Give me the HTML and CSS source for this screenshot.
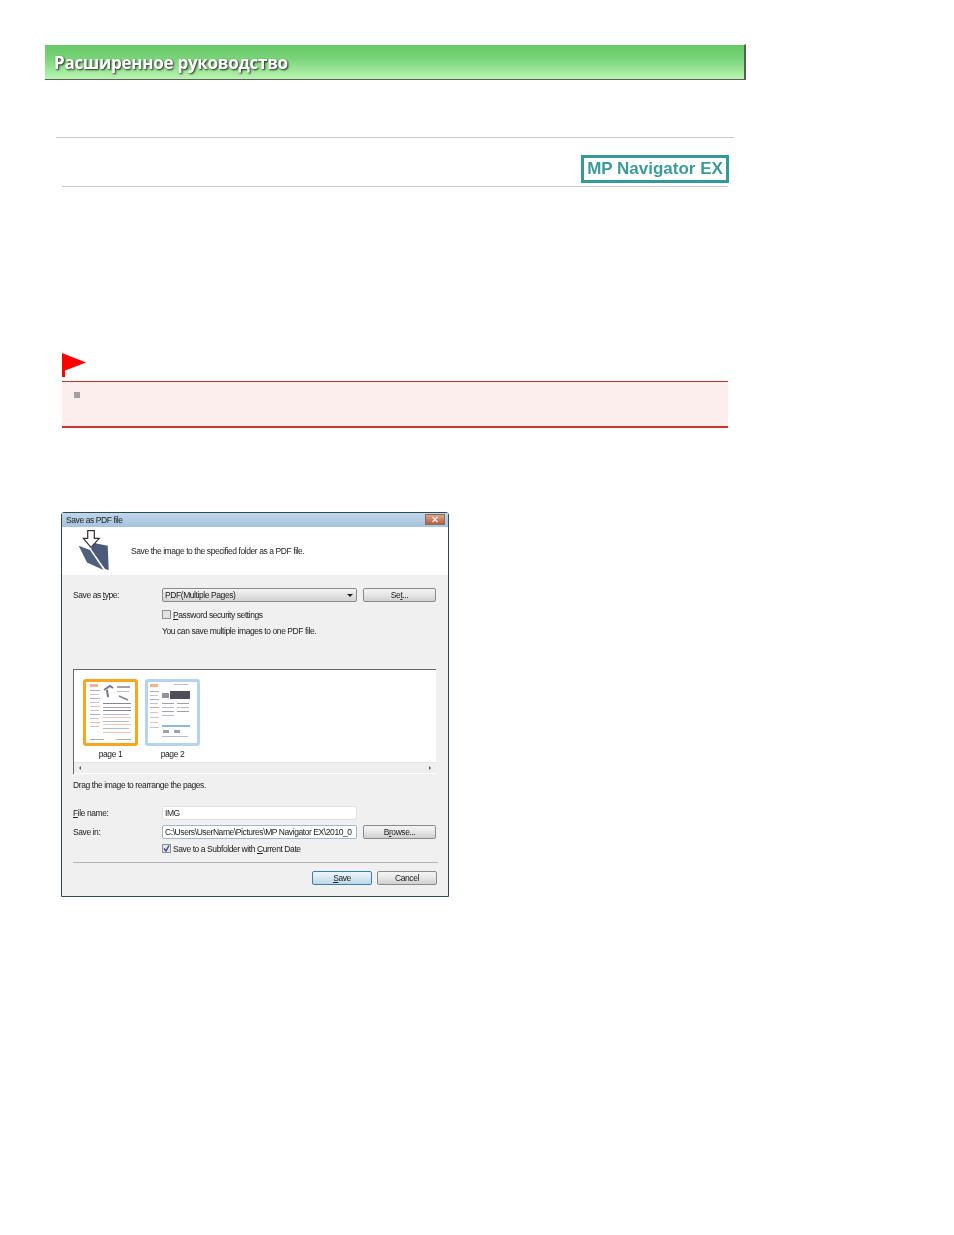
FILE: index.html
```html
<!DOCTYPE html>
<html lang="ru">
<head>
    <meta charset="UTF-8">
    <title>Расширенное руководство</title>
    <link rel="stylesheet" href="styles.css">
</head>
<body>
    <div class="page-head"><h1>Расширенное руководство</h1></div>
    <hr class="rule-top">
    <div class="content">
        <div class="product-row"><span class="product-logo">MP Navigator EX</span></div>

        <svg class="flag" width="25" height="25" viewBox="0 0 25 25"><path d="M0 0 L24 9.5 L3 17.5 L3 24 L0 24 Z" fill="#f00"/></svg>
        <div class="note"><span class="note-bullet"></span></div>

        <div class="dialog">
            <div class="titlebar">
                <span>Save as PDF file</span>
                <span class="close-btn"><svg width="8" height="7" viewBox="0 0 8 7"><path d="M1.5 1 L6.5 6 M6.5 1 L1.5 6" stroke="#f4e8e0" stroke-width="1.4"/></svg></span>
            </div>
            <div class="dialog-head">
                <svg class="save-icon" width="36" height="44" viewBox="0 0 36 44">
                    <path d="M18 14 L31.7 16.7 L32.7 41 L29 40 L15 20 Z" fill="#4a5a78"/>
                    <path d="M2.7 16.7 L14 21 L27.5 41 L11 33.5 Z" fill="#4f5f7e"/>
                    <path d="M11.7 1.7 H18.3 V9.3 H23.3 L15 18.3 L7.3 9.3 H11.7 Z" fill="#fff" stroke="#333" stroke-width="1.2"/>
                </svg>
                <span>Save the image to the specified folder as a PDF file.</span>
            </div>
            <div class="dialog-body">
                <div class="form-row type-row">
                    <label class="field-label">Save as <u>t</u>ype:</label>
                    <div class="select"><span>PDF(Multiple Pages)</span><i class="arrow"></i></div>
                    <button class="btn">Se<u>t</u>...</button>
                </div>
                <div class="check-row"><span class="check"></span><span><u>P</u>assword security settings</span></div>
                <div class="hint">You can save multiple images to one PDF file.</div>

                <div class="page-list">
                    <div class="thumbs">
                        <div class="thumb">
                            <div class="thumb-frame selected">
                                <svg width="49" height="61" viewBox="0 0 49 61">
                                    <rect x="4" y="2" width="8" height="3" fill="#f0a070"/>
                                    <rect x="4" y="8" width="10" height="1" fill="#99b"/><rect x="4" y="12" width="9" height="1" fill="#abc"/><rect x="4" y="16" width="10" height="1" fill="#99b"/><rect x="4" y="20" width="9" height="1" fill="#abc"/><rect x="4" y="24" width="10" height="1" fill="#f0b090"/><rect x="4" y="28" width="9" height="1" fill="#abc"/><rect x="4" y="32" width="10" height="1" fill="#99b"/><rect x="4" y="36" width="9" height="1" fill="#abc"/><rect x="4" y="40" width="10" height="1" fill="#f0b090"/><rect x="4" y="44" width="9" height="1" fill="#abc"/>
                                    <path d="M18 8 L24 4 L27 6 M21 8 L22 15" stroke="#556" stroke-width="2" fill="none"/>
                                    <rect x="31" y="4" width="13" height="2" fill="#889"/><rect x="31" y="9" width="12" height="1" fill="#aab"/><path d="M33 14 L42 18" stroke="#667" stroke-width="1.5"/>
                                    <rect x="17" y="21" width="28" height="1" fill="#668"/><rect x="17" y="25" width="28" height="1" fill="#88a"/><rect x="17" y="28" width="28" height="1" fill="#668"/><rect x="17" y="32" width="26" height="1" fill="#aab"/><rect x="17" y="35" width="28" height="1" fill="#e8b8a0"/><rect x="17" y="39" width="26" height="1" fill="#aab"/><rect x="17" y="42" width="28" height="1" fill="#e8b8a0"/><rect x="17" y="46" width="26" height="1" fill="#aab"/><rect x="17" y="50" width="28" height="1" fill="#e8b8a0"/>
                                    <rect x="4" y="57" width="14" height="1" fill="#99a"/><rect x="30" y="57" width="15" height="1" fill="#99a"/>
                                </svg>
                            </div>
                            <span>page 1</span>
                        </div>
                        <div class="thumb">
                            <div class="thumb-frame">
                                <svg width="45" height="59" viewBox="0 0 45 59">
                                    <rect x="2" y="2" width="8" height="3" fill="#f0a070"/><rect x="26" y="2" width="14" height="1" fill="#aab"/>
                                    <rect x="2" y="9" width="9" height="1" fill="#99b"/><rect x="2" y="13" width="8" height="1" fill="#abc"/><rect x="2" y="17" width="9" height="1" fill="#99b"/><rect x="2" y="21" width="8" height="1" fill="#abc"/><rect x="2" y="25" width="9" height="1" fill="#99b"/><rect x="2" y="30" width="8" height="1" fill="#f0b090"/><rect x="2" y="35" width="9" height="1" fill="#abc"/><rect x="2" y="40" width="8" height="1" fill="#f0b090"/><rect x="2" y="45" width="9" height="1" fill="#abc"/>
                                    <rect x="14" y="11" width="7" height="5" fill="#778"/><rect x="22" y="9" width="20" height="8" fill="#223"/>
                                    <rect x="14" y="21" width="12" height="1" fill="#889"/><rect x="29" y="21" width="12" height="1" fill="#889"/><rect x="14" y="25" width="12" height="1" fill="#aab"/><rect x="29" y="25" width="12" height="1" fill="#aab"/><rect x="14" y="29" width="12" height="1" fill="#889"/><rect x="29" y="29" width="12" height="1" fill="#889"/><rect x="14" y="33" width="12" height="1" fill="#aab"/>
                                    <rect x="14" y="43" width="28" height="2" fill="#6aa8dd"/>
                                    <rect x="15" y="48" width="6" height="3" fill="#889"/><rect x="26" y="48" width="6" height="3" fill="#889"/><rect x="14" y="54" width="26" height="1" fill="#aab"/>
                                </svg>
                            </div>
                            <span>page 2</span>
                        </div>
                    </div>
                    <div class="scrollbar"><i class="tri-left"></i><i class="tri-right"></i></div>
                </div>

                <div class="hint drag-hint">Drag the image to rearrange the pages.</div>

                <div class="form-row name-row">
                    <label class="field-label"><u>F</u>ile name:</label>
                    <div class="text-input">IMG</div>
                </div>
                <div class="form-row folder-row">
                    <label class="field-label">Save in:</label>
                    <div class="text-input focused">C:\Users\UserName\Pictures\MP Navigator EX\2010_0</div>
                    <button class="btn">B<u>r</u>owse...</button>
                </div>
                <div class="check-row subfolder-row"><span class="check checked"><svg width="9" height="9" viewBox="0 0 9 9"><path d="M2 4.5 L4 7 L7 1.5" stroke="#3a4a80" stroke-width="1.4" fill="none"/></svg></span><span>Save to a Subfolder with <u>C</u>urrent Date</span></div>

                <div class="separator"></div>
                <div class="actions">
                    <button class="btn btn-default"><u>S</u>ave</button>
                    <button class="btn">Cancel</button>
                </div>
            </div>
        </div>
    </div>
</body>
</html>
```

FILE: styles.css
```css
body {
    margin: 0;
    background: #fff;
    font-family: "Open Sans", "Liberation Sans", sans-serif;
    color: #222;
}
.page-head {
    box-sizing: border-box;
    width: 701px;
    height: 36px;
    margin: 44px 0 0 45px;
    border-top: 1px solid #fff;
    border-right: 2px solid #5c5c5c;
    border-bottom: 1px solid #5c5c5c;
    background: linear-gradient(#66c966, #7ad47a 40%, #b9f5b0);
}
h1 {
    margin: 0;
    padding-left: 9px;
    font-size: 17px;
    line-height: 35px;
    height: 35px;
    font-weight: 700;
    letter-spacing: -0.27px;
    color: #fff;
    text-shadow: 1px 1px 2px #222;
    filter: blur(0.3px);
}
.rule-top {
    width: 678px;
    height: 1px;
    margin: 57px 0 0 56px;
    border: 0;
    background: #c8c8c8;
}
.content {
    width: 666px;
    margin-left: 62px;
}
.product-row {
    display: flex;
    justify-content: flex-end;
    height: 31px;
    padding-top: 17px;
    border-bottom: 1px solid #c8c8c8;
}
.product-logo {
    box-sizing: border-box;
    width: 148px;
    height: 28px;
    margin-right: -1px;
    border: 3px solid #339999;
    color: #3d9a9a;
    font-family: "Liberation Sans", sans-serif;
    font-size: 17px;
    font-weight: 700;
    line-height: 22px;
    text-align: center;
    white-space: nowrap;
    filter: blur(0.3px);
}
.flag {
    display: block;
    margin-top: 166px;
}
.note {
    box-sizing: border-box;
    height: 47px;
    margin-top: 3px;
    padding: 10px 0 0 12px;
    background: #fdeeee;
    border-top: 1px solid #cc3333;
    border-bottom: 2px solid #cc3333;
}
.note-bullet {
    display: block;
    width: 6px;
    height: 6px;
    background: #a0a0a0;
}

/* dialog */
.dialog {
    box-sizing: border-box;
    width: 388px;
    height: 385px;
    margin: 84px 0 0 -1px;
    border: 1px solid #33474f;
    border-radius: 3px 3px 0 0;
    font-family: "Liberation Sans", sans-serif;
    font-size: 8.5px;
    letter-spacing: -0.42px;
    color: #222;
}
.titlebar {
    display: flex;
    justify-content: space-between;
    align-items: flex-start;
    height: 14px;
    padding: 0 3px 0 4px;
    line-height: 14px;
    background: linear-gradient(#c0d6ea, #a5c3de);
}
.titlebar > span:first-child, .dialog-head span, .field-label, .hint, .check-row, .thumb span, .select span, .text-input, .btn {
    filter: blur(0.25px);
}
.close-btn {
    display: flex;
    align-items: center;
    justify-content: center;
    width: 20px;
    height: 11px;
    margin-top: 1px;
    background: linear-gradient(#d8a58c, #b5603e);
    border: 1px solid #8a6a5a;
    box-sizing: border-box;
}
.dialog-head {
    display: flex;
    align-items: center;
    height: 48px;
    background: #fff;
}
.save-icon {
    margin: 0 19px 0 14px;
}
.dialog-body {
    box-sizing: border-box;
    height: 321px;
    padding: 13px 11px 0;
    background: #f0f0f0;
}
.form-row {
    display: flex;
    align-items: center;
    height: 14px;
}
.field-label {
    width: 89px;
    flex: none;
}
.select, .text-input {
    box-sizing: border-box;
    width: 195px;
    height: 14px;
    flex: none;
    line-height: 12px;
    padding-left: 2px;
    border: 1px solid #b5b5b5;
    border-radius: 2px;
    white-space: nowrap;
    overflow: hidden;
}
.select {
    display: flex;
    justify-content: space-between;
    align-items: center;
    border-color: #8a8a8a;
    background: linear-gradient(#f4f4f4, #e2e2e2 50%, #d4d4d4);
}
.arrow {
    width: 0;
    height: 0;
    margin-right: 3px;
    border: 3px solid transparent;
    border-top: 3px solid #222;
    border-bottom: 0;
}
.text-input {
    background: #fff;
    border-color: #e0e0e0;
}
.text-input.focused {
    border-color: #9fb8cc;
}
.btn {
    box-sizing: border-box;
    width: 73px;
    height: 14px;
    margin-left: 6px;
    padding: 0;
    flex: none;
    font: inherit;
    letter-spacing: inherit;
    line-height: 12px;
    color: #222;
    border: 1px solid #8a8a8a;
    border-radius: 2px;
    background: linear-gradient(#f4f4f4, #e6e6e6 50%, #d0d0d0);
}
.check-row {
    display: flex;
    align-items: center;
    gap: 2px;
    height: 9px;
    margin: 8px 0 0 89px;
}
.check {
    box-sizing: border-box;
    display: block;
    width: 9px;
    height: 9px;
    flex: none;
    border: 1px solid #8e8e8e;
    background: #e2e2e2;
}
.check.checked {
    background: #dfe6f2;
}
.check svg {
    display: block;
    margin: -1px;
}
.hint {
    margin: 7px 0 0 89px;
    line-height: 10px;
}
.page-list {
    box-sizing: border-box;
    width: 363px;
    height: 105px;
    margin-top: 33px;
    border-top: 1px solid #666;
    border-left: 1px solid #666;
    background: #fff;
}
.thumbs {
    display: flex;
    gap: 7px;
    height: 92px;
    padding: 9px 0 0 9px;
    box-sizing: border-box;
}
.thumb {
    display: flex;
    flex-direction: column;
    align-items: center;
    width: 55px;
}
.thumb span {
    margin-top: 3px;
    line-height: 10px;
}
.thumb-frame {
    box-sizing: border-box;
    width: 55px;
    height: 67px;
    border: 3px solid #b5d3f0;
    border-radius: 3px;
    background: #fff;
}
.thumb-frame.selected {
    border-color: #f5a81c;
}
.thumb-frame svg {
    display: block;
    opacity: 0.8;
    filter: blur(0.6px);
}
.scrollbar {
    display: flex;
    justify-content: space-between;
    align-items: center;
    height: 10px;
    padding: 0 5px;
    background: #efefef;
    border-top: 1px solid #e4e4e4;
}
.tri-left, .tri-right {
    width: 0;
    height: 0;
    border: 2.5px solid transparent;
}
.tri-left {
    border-right-color: #555;
    border-left: 0;
}
.tri-right {
    border-left-color: #555;
    border-right: 0;
}
.drag-hint {
    margin: 6px 0 0;
}
.name-row {
    margin-top: 16px;
}
.folder-row {
    margin-top: 5px;
}
.subfolder-row {
    margin-top: 5px;
}
.separator {
    width: 365px;
    height: 1px;
    margin-top: 9px;
    background: #b4b4b4;
}
.actions {
    display: flex;
    justify-content: flex-end;
    width: 364px;
    margin-top: 8px;
}
.actions .btn {
    width: 60px;
    margin-left: 5px;
}
.actions .btn-default {
    border-color: #3d7fa8;
    background: linear-gradient(#eef6fb, #d6e8f3 50%, #bcd8e8);
}
```
